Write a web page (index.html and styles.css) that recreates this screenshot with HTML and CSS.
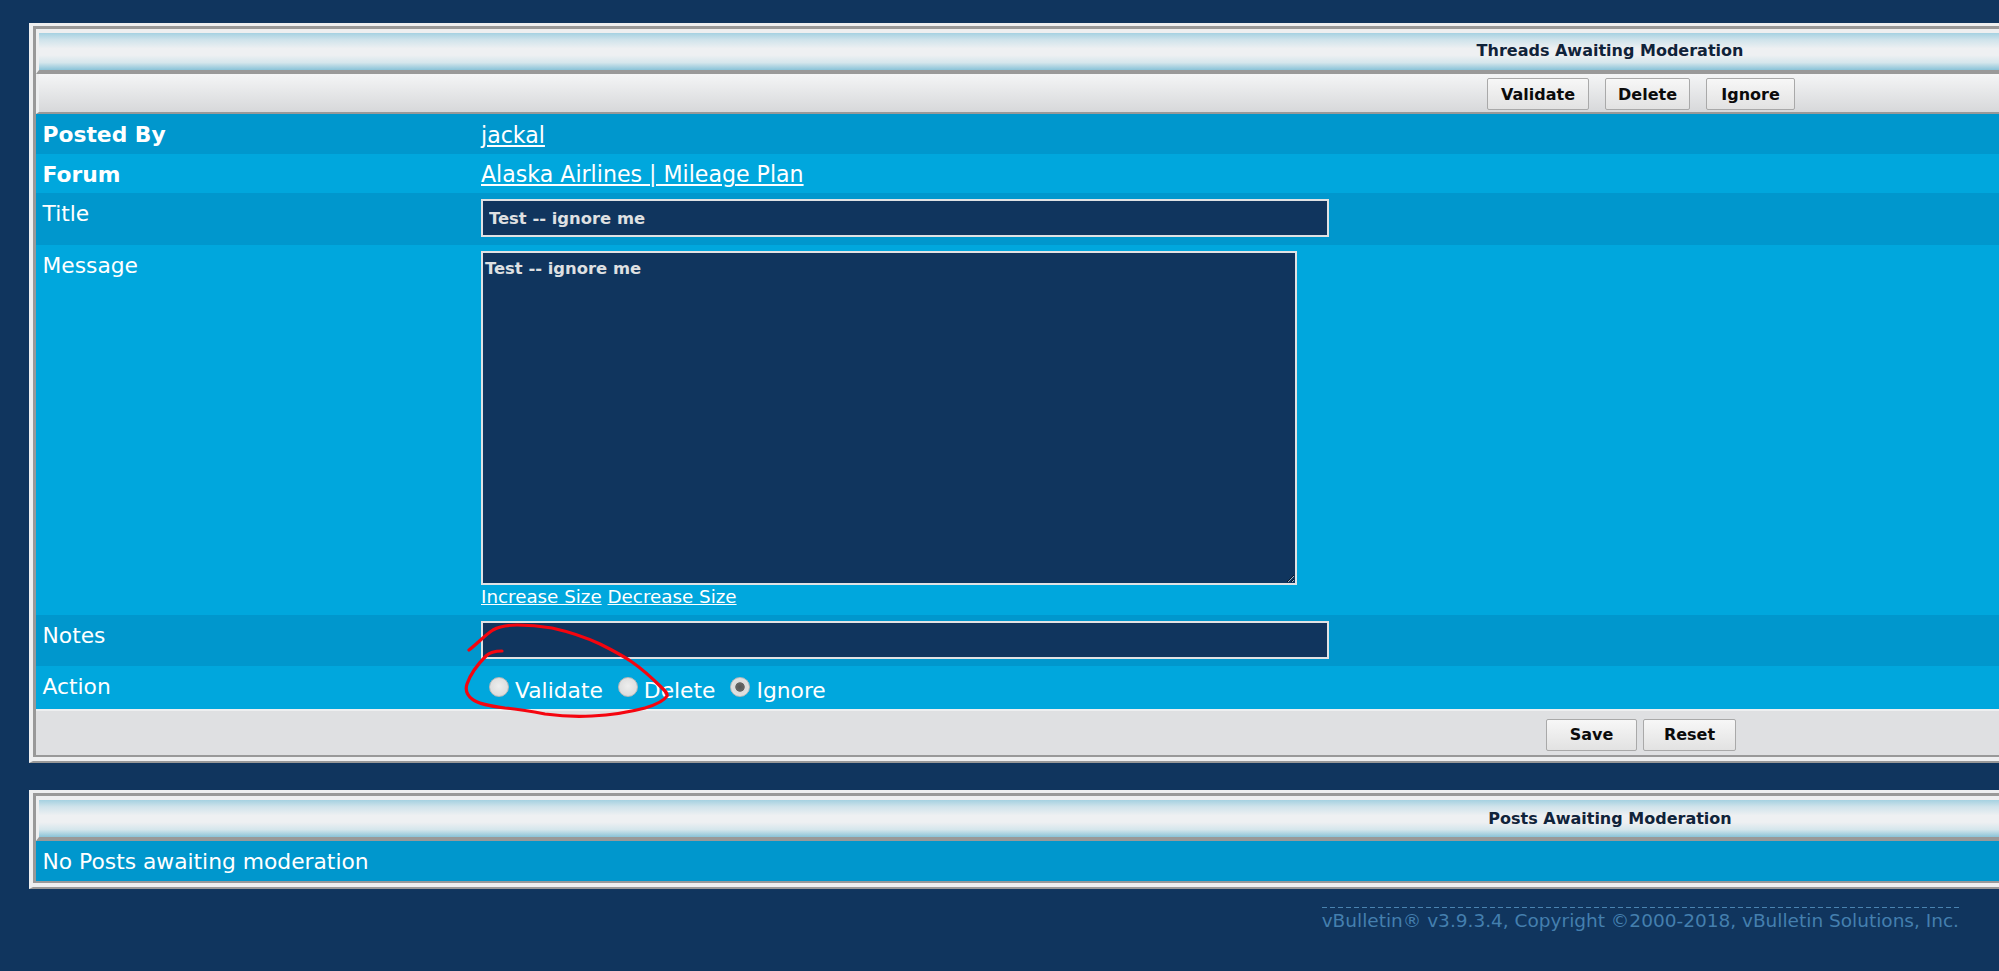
FILE: index.html
```html
<!DOCTYPE html>
<html lang="en">
<head>
<meta charset="utf-8">
<title>Moderation</title>
<link rel="stylesheet" href="styles.css">
</head>
<body>
<form class="panel panel-threads">
  <div class="panel-inner">
    <div class="title-bar"><span class="title-text">Threads Awaiting Moderation</span></div>
    <div class="action-bar">
      <button type="button" class="btn btn-validate">Validate</button>
      <button type="button" class="btn btn-delete">Delete</button>
      <button type="button" class="btn btn-ignore">Ignore</button>
    </div>
    <div class="row row-dark row-info"><div class="label strong">Posted By</div><div class="value"><a href="#">jackal</a></div></div>
    <div class="row row-light row-info"><div class="label strong">Forum</div><div class="value"><a href="#">Alaska Airlines | Mileage Plan</a></div></div>
    <div class="row row-dark row-field"><div class="label">Title</div><div class="value"><input class="text-input" type="text" value="Test -- ignore me"></div></div>
    <div class="row row-light row-message">
      <div class="label">Message</div>
      <div class="value">
        <textarea class="text-area">Test -- ignore me</textarea>
        <div class="size-links"><a href="#">Increase Size</a> <a href="#">Decrease Size</a></div>
      </div>
    </div>
    <div class="row row-dark row-field"><div class="label">Notes</div><div class="value"><input class="text-input" type="text"></div></div>
    <div class="row row-light row-action">
      <div class="label">Action</div>
      <div class="value radios">
        <label class="radio-label"><input class="radio" type="radio" name="a">Validate</label>
        <label class="radio-label"><input class="radio" type="radio" name="a">Delete</label>
        <label class="radio-label"><input class="radio" type="radio" name="a" checked>Ignore</label>
      </div>
    </div>
    <div class="save-bar">
      <button type="button" class="btn btn-save">Save</button>
      <button type="button" class="btn btn-reset">Reset</button>
    </div>
  </div>
</form>
<div class="panel panel-posts">
  <div class="panel-inner">
    <div class="title-bar"><span class="title-text">Posts Awaiting Moderation</span></div>
    <div class="row row-dark row-info"><div class="label">No Posts awaiting moderation</div></div>
  </div>
</div>
<footer class="footer"><div class="footer-text">vBulletin® v3.9.3.4, Copyright ©2000-2018, vBulletin Solutions, Inc.</div></footer>
<svg class="scribble" width="240" height="110" viewBox="460 620 240 110" aria-hidden="true">
  <path d="M469 650 C478 643 485 635 493 630 C500 626 508 625 517 625 C530 625 540 626 552 628 C570 632 585 637 600 644 C612 650 622 655 632 662 C642 669 652 678 660 686 C664 690 668 693 667 696 C664 701 655 705 645 708 C630 712 612 715 592 716 C575 717 560 716 545 714 C530 711 518 709 505 708 C490 706 478 704 472 699 C467 695 465 690 467 684 C470 675 478 664 486 656 C490 652 495 651 502 651" />
</svg>
</body>
</html>
```
FILE: styles.css
```css
html, body {
  margin: 0;
  padding: 0;
  height: 971px;
  overflow: hidden;
}
body {
  position: relative;
  background: #10355e;
  font-family: "DejaVu Sans", Verdana, sans-serif;
  color: #fff;
}
.panel {
  box-sizing: border-box;
  width: 3219px;
  margin-left: 29px;
  background: #eeeff0;
  border-style: solid;
  border-width: 3px 2px 2px 4px;
  border-color: #eeeff0 #999 #999 #eeeff0;
  padding-bottom: 4px;
}
.panel-threads { margin-top: 23px; }
.panel-posts { margin-top: 27px; }
.panel-inner {
  border-style: solid;
  border-width: 3px 3px 2px 3px;
  border-color: #999;
}
.title-bar {
  height: 37px;
  border-top: 4px solid #eeeff0;
  border-left: 3px solid #eeeff0;
  border-bottom: 4px solid #999;
  padding-right: 62px;
  background: linear-gradient(#a5d1e1 0, #cfe3eb 18%, #eef0f2 42%, #eef0f2 60%, #d5e6ec 80%, #8ac3d8 100%);
  display: flex;
  align-items: center;
  justify-content: center;
}
.title-text {
  color: #10233a;
  font-size: 16px;
  font-weight: bold;
}
.panel-threads .title-text { margin-bottom: 2px; }
.action-bar {
  box-sizing: border-box;
  height: 40px;
  border-left: 3px solid #eeeff0;
  border-bottom: 2px solid #999;
  background: linear-gradient(#f4f5f6, #d7d8da);
  display: flex;
  align-items: center;
  justify-content: center;
  gap: 16px;
  padding-top: 2px;
}
.btn {
  box-sizing: border-box;
  height: 32px;
  padding: 0;
  border: 1px solid #a9a9a9;
  border-radius: 2px;
  background: linear-gradient(#f7f7f7, #e2e2e2);
  color: #0b0b0b;
  font-family: "DejaVu Sans", Verdana, sans-serif;
  font-size: 16px;
  font-weight: bold;
}
.btn-validate { width: 102px; }
.btn-delete { width: 85px; }
.btn-ignore { width: 89px; }
.btn-save { width: 91px; }
.btn-reset { width: 93px; }
.row {
  display: flex;
  font-size: 21.8px;
}
.row-dark { background: #0097cd; }
.row-light { background: #00a7dd; }
.row-info {
  box-sizing: border-box;
  height: 39.5px;
  padding-top: 2px;
  align-items: center;
}
.row-field { height: 51.5px; }
.row-message { height: 370px; }
.row-action { height: 43px; }
.label {
  box-sizing: border-box;
  flex: 0 0 445px;
  padding-left: 6.5px;
  white-space: nowrap;
}
.row-field .label, .row-message .label, .row-action .label { padding-top: 8px; }
.strong { font-weight: bold; }
.value a { color: #fff; font-size: 22.1px; }
.row-field .value { padding-top: 6px; }
.row-message .value { padding-top: 6px; }
.text-input {
  display: block;
  box-sizing: border-box;
  width: 848px;
  height: 38px;
  padding: 0 6px;
  border: 2px solid #e0e2e4;
  background: #10355e;
  color: #dfe0e2;
  font-family: "DejaVu Sans", Verdana, sans-serif;
  font-size: 16.4px;
  font-weight: bold;
}
.text-area {
  display: block;
  box-sizing: border-box;
  width: 816px;
  height: 334px;
  margin: 0;
  padding: 6px 2px;
  border: 2px solid #e0e2e4;
  background: #10355e;
  color: #dfe0e2;
  font-family: "DejaVu Sans", Verdana, sans-serif;
  font-size: 16.4px;
  font-weight: bold;
}
.size-links {
  margin-top: 1px;
  font-size: 18.3px;
  line-height: 22px;
}
.size-links a { font-size: 18.3px; }
.radios {
  display: flex;
  padding-top: 11px;
  margin-left: 8px;
}
.radio-label {
  display: flex;
  align-items: flex-start;
  margin-right: 15px;
  line-height: 28px;
}
.radio {
  appearance: none;
  box-sizing: border-box;
  width: 20px;
  height: 20px;
  margin: 0 6px 0 0;
  border: 1px solid #b9b9b9;
  border-radius: 50%;
  background: radial-gradient(circle at 50% 45%, #eeeeee, #d6d6d6);
}
.radio:checked {
  background: radial-gradient(circle, #555 0, #666 34%, #dcdcdc 40%, #e6e6e6 100%);
}
.save-bar {
  box-sizing: border-box;
  height: 46px;
  border-top: 2px solid #eeeff0;
  background: #dfe0e2;
  display: flex;
  align-items: center;
  justify-content: center;
  gap: 6px;
  padding-left: 3px;
  padding-top: 3px;
}
.footer {
  display: flex;
  justify-content: flex-end;
  margin-top: 18px;
  padding-right: 40px;
}
.footer-text {
  padding-top: 3px;
  background: repeating-linear-gradient(90deg, #4a83b0 0 5px, transparent 5px 8px) top left / 100% 1px no-repeat;
  color: #447fae;
  font-size: 18.5px;
}
.scribble {
  position: absolute;
  left: 460px;
  top: 620px;
  overflow: visible;
}
.scribble path {
  fill: none;
  stroke: #f5050f;
  stroke-width: 3.2;
  stroke-linecap: round;
  stroke-linejoin: round;
}
```
